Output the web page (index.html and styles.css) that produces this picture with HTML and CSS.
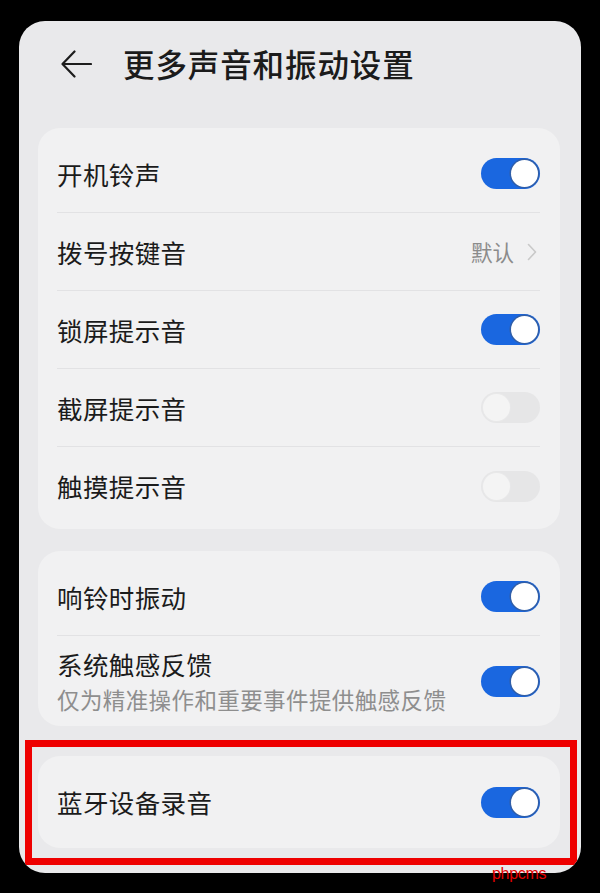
FILE: index.html
```html
<!DOCTYPE html>
<html lang="zh-CN">
<head>
  <meta charset="UTF-8" />
  <meta name="viewport" content="width=device-width, initial-scale=1.0"/>
  <title>更多声音和振动设置</title>
  <link rel="stylesheet" href="styles.css">
</head>
<body>
  <div class="screen">
    <header class="topbar">
      <svg class="back" viewBox="0 0 32 30" width="32" height="30">
        <path d="M31 15H2.5M14.5 2.5L2.5 15l12 12.5" fill="none" stroke="#1d1d1d" stroke-width="2.2" stroke-linecap="round" stroke-linejoin="round"/>
      </svg>
      <h1>更多声音和振动设置</h1>
    </header>

    <section class="card">
      <div class="row"><span class="label">开机铃声</span><span class="switch on"></span></div>
      <div class="row">
        <span class="label">拨号按键音</span>
        <span class="value">默认
          <svg class="chevron" viewBox="0 0 10 18" width="10" height="18">
            <path d="M1.5 1.5L8.5 9l-7 7.5" fill="none" stroke="#c9c9c9" stroke-width="1.6" stroke-linecap="round" stroke-linejoin="round"/>
          </svg>
        </span>
      </div>
      <div class="row"><span class="label">锁屏提示音</span><span class="switch on"></span></div>
      <div class="row"><span class="label">截屏提示音</span><span class="switch"></span></div>
      <div class="row"><span class="label">触摸提示音</span><span class="switch"></span></div>
    </section>

    <section class="card vibe">
      <div class="row"><span class="label">响铃时振动</span><span class="switch on"></span></div>
      <div class="row tall">
        <div class="text">
          <span class="label">系统触感反馈</span>
          <span class="hint">仅为精准操作和重要事件提供触感反馈</span>
        </div>
        <span class="switch on"></span>
      </div>
    </section>

    <section class="card solo">
      <div class="row"><span class="label">蓝牙设备录音</span><span class="switch on"></span></div>
    </section>

    <!-- highlight frame around the bluetooth card -->
    <div class="mark"></div>
  </div>
  <span class="watermark">phpcms</span>
</body>
</html>
```

FILE: styles.css
```css
* {
  box-sizing: border-box;
}

body {
  margin: 0;
  width: 600px;
  height: 893px;
  background: #000;
  position: relative;
  overflow: hidden;
  font-family: "Noto Sans CJK SC", "Noto Sans", sans-serif;
  color: #1b1b1b;
}

.screen {
  position: relative;
  margin: 21px 19px 0 19px;
  height: 852px;
  background: #e9e9eb;
  border-radius: 26px;
  overflow: hidden;
}

.topbar {
  height: 86px;
  display: flex;
  align-items: center;
  padding-left: 41px;
}

.back {
  display: block;
  flex-shrink: 0;
}

.topbar h1 {
  margin: 0 0 0 31px;
  font-size: 31.5px;
  font-weight: 500;
  letter-spacing: 0.9px;
  line-height: 1;
}

.card {
  margin: 21px 21px 0 19px;
  background: #f1f1f2;
  border-radius: 22px;
  padding: 7px 20px 4px 19px;
}

.row {
  height: 78px;
  display: flex;
  align-items: center;
  justify-content: space-between;
  border-bottom: 1px solid #e2e2e4;
}

.row:last-child {
  border-bottom: none;
}

.label {
  font-size: 25.5px;
  line-height: 36px;
  letter-spacing: 0.4px;
}

.value {
  display: flex;
  align-items: center;
  font-size: 21.5px;
  color: #8b8b8b;
  padding-right: 3px;
}

.chevron {
  margin-left: 13px;
}

.vibe {
  margin-top: 22px;
}

.row.tall {
  height: auto;
  padding: 10px 0 6px;
}

.text {
  display: flex;
  flex-direction: column;
}

.hint {
  font-size: 22.5px;
  line-height: 34px;
  letter-spacing: 0.4px;
  color: #8e8e8e;
}

.solo {
  margin-top: 30px;
  padding-top: 0;
  padding-bottom: 0;
}

.solo .row {
  height: 92px;
}

/* toggle switch */
.switch {
  position: relative;
  width: 59px;
  height: 31px;
  border-radius: 16px;
  background: #e6e6e7;
  flex-shrink: 0;
}

.switch::after {
  content: "";
  position: absolute;
  top: 2px;
  left: 2px;
  width: 27px;
  height: 27px;
  border-radius: 50%;
  background: #f4f4f4;
  box-shadow: 0 0 0 1px #e8e8e9;
}

.switch.on {
  background: #1a67e0;
}

.switch.on::after {
  left: auto;
  right: 2px;
  background: #fff;
  box-shadow: 0 0 0 1.5px #2f5ea9;
}

.mark {
  position: absolute;
  left: 6px;
  top: 719px;
  width: 552px;
  height: 125px;
  border: 7px solid #ee0000;
}

.watermark {
  position: absolute;
  left: 492px;
  top: 865px;
  font-family: "Liberation Sans", sans-serif;
  font-size: 16px;
  letter-spacing: -0.3px;
  color: #e40000;
}
```
